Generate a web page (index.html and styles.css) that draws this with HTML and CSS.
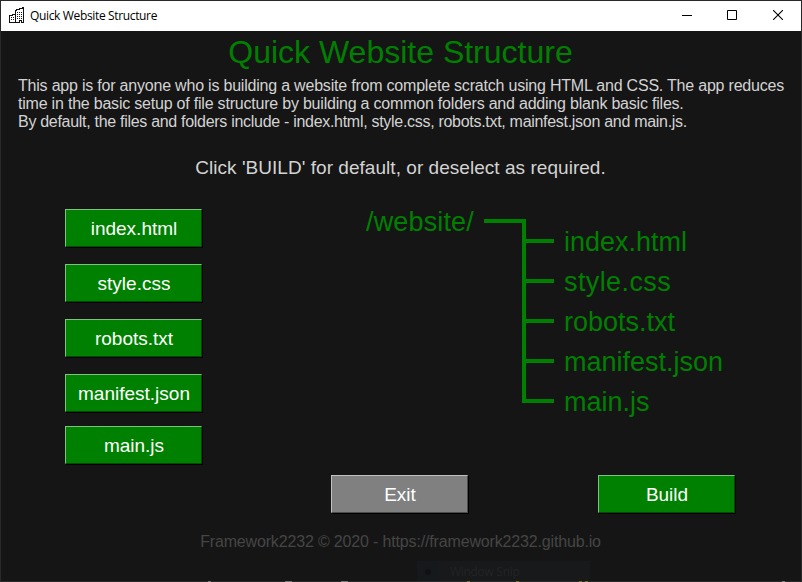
FILE: index.html
```
<!DOCTYPE html>
<html lang="en">
<head>
<meta charset="utf-8">
<title>Quick Website Structure</title>
<link rel="stylesheet" href="styles.css">
</head>
<body>
<div class="window">
  <header class="titlebar">
    <svg class="app-icon" width="16" height="17" viewBox="0 0 16 17" fill="none" stroke="#111" shape-rendering="crispEdges">
      <path d="M.5 15V8.500H3V7.500H6M0 15.500H10V13.500H12V15.500H15M14.500 15V.5H13V1.500H10V2.500H7V3.500H6.500V15"/>
      <path d="M8 5.500H13M8 7.500H13M8 9.500H13M8 11.500H13M2 10.500H5M2 12.500H5" stroke-dasharray="1 1"/>
    </svg>
    <span class="caption">Quick Website Structure</span>
    <div class="controls">
      <svg width="10" height="10"><path d="M0 5.500H10" stroke="#000" shape-rendering="crispEdges"/></svg>
      <svg class="maximize" width="10" height="10"><path d="M.5 .5H9.500V9.500H.5Z" fill="none" stroke="#000"/></svg>
      <svg width="10" height="10"><path d="M0 0L10 10M10 0L0 10" stroke="#000" stroke-width="1.100"/></svg>
    </div>
  </header>
  <main>
    <h1>Quick Website Structure</h1>
    <p class="intro"><span class="l1">This app is for anyone who is building a website from complete scratch using HTML and CSS. The app reduces</span><br><span class="l2">time in the basic setup of file structure by building a common folders and adding blank basic files.</span><br><span class="l3">By default, the files and folders include - index.html, style.css, robots.txt, mainfest.json and main.js.</span></p>
    <p class="hint">Click 'BUILD' for default, or deselect as required.</p>
    <section class="workspace">
      <div class="files">
        <button>index.html</button>
        <button>style.css</button>
        <button>robots.txt</button>
        <button>manifest.json</button>
        <button class="last">main.js</button>
      </div>
      <div class="tree">
        <span class="root">/website/</span>
        <svg class="branches" width="70" height="184" viewBox="0 0 70 184" fill="none" stroke="#008000" stroke-width="4">
          <path d="M0 2H40V182H70M40 22H70M40 62H70M40 102H70M40 142H70"/>
        </svg>
        <ul>
          <li>index.html</li>
          <li class="css">style.css</li>
          <li>robots.txt</li>
          <li>manifest.json</li>
          <li>main.js</li>
        </ul>
      </div>
    </section>
    <div class="actions">
      <button class="exit">Exit</button>
      <button>Build</button>
    </div>
    <footer>Framework2232 © 2020 - https://framework2232.github.io</footer>
  </main>
  <div class="ghost"><span class="dot"></span><span>Window Snip</span></div>
  <svg class="edge" width="802" height="2" shape-rendering="crispEdges">
    <path d="M0 1.500H802" stroke="#292929"/>
    <path d="M208 1.500h3M285 1.500h7M341 1.500h7M782 1.500h3" stroke="#777"/>
    <path d="M467 1.500h3M516 1.500h3M579 1.500h3M585 1.500h3" stroke="#776b18"/>
  </svg>
</div>
</body>
</html>
```
FILE: styles.css
```
* { box-sizing: border-box; }
body { margin: 0; background: #151515; }
.window {
  position: relative;
  width: 802px;
  height: 582px;
  overflow: hidden;
  border: 1px solid #292929;
  border-bottom: 0;
  background: #151515;
  font-family: "Liberation Sans", Arial, sans-serif;
}
.titlebar {
  display: flex;
  align-items: center;
  height: 30px;
  padding-left: 8px;
  background: #fff;
}
.app-icon { flex: none; margin-top: -1px; }
.caption {
  margin-left: 5px;
  font: 12px/16px "Open Sans", "Noto Sans", sans-serif;
  letter-spacing: -0.35px;
  color: #000;
  white-space: nowrap;
}
.controls { display: flex; gap: 36px; margin: -2px 18px 0 auto; }
.maximize { margin-left: -1px; }
h1, p, ul { margin: 0; padding: 0; font-weight: normal; white-space: nowrap; }
h1 {
  padding: 3px 1px 0 0;
  font-size: 32px;
  line-height: 36px;
  text-align: center;
  color: #008000;
}
.intro {
  height: 54px;
  margin: 7px 0 0 17px;
  font-size: 16px;
  line-height: 18px;
  color: #d3d3d3;
}
.l1 { letter-spacing: -0.207px; }
.l2 { letter-spacing: -0.21px; }
.l3 { letter-spacing: -0.295px; }
.hint {
  margin-top: 26px;
  padding-right: 1px;
  font-size: 19px;
  line-height: 22px;
  letter-spacing: 0.04px;
  text-align: center;
  color: #d3d3d3;
}
.workspace { display: flex; height: 296px; padding: 30px 0 0 64px; }
.files { display: flex; flex-direction: column; gap: 17px; }
button {
  flex: none;
  width: 137px;
  height: 38px;
  padding: 2px 0 0 1px;
  border: 1px solid;
  border-color: #80c080 #004b00 #004b00 #80c080;
  border-radius: 0;
  box-shadow: 1px 1px 0 #000;
  background: #008000;
  color: #fff;
  font: 19px/22px "Liberation Sans", Arial, sans-serif;
}
.last { margin-top: -3px; }
.tree { display: flex; margin-left: 164px; color: #008000; font-size: 27px; }
.root { width: 118px; line-height: 30px; margin-top: -2px; letter-spacing: 0.15px; }
.branches { margin-top: 10px; }
.tree ul { margin: 13px 0 0 10px; list-style: none; }
.tree li { height: 40px; line-height: 40px; }
.css { letter-spacing: 0.4px; }
.actions { display: flex; gap: 130px; padding-left: 330px; }
.exit { background: #808080; border-color: #c0c0c0 #4b4b4b #4b4b4b #c0c0c0; }
footer {
  margin-top: 20px;
  padding-right: 1px;
  font-size: 16px;
  line-height: 18px;
  letter-spacing: -0.16px;
  text-align: center;
  color: #454545;
}
.ghost {
  position: absolute;
  left: 416px;
  top: 560px;
  display: flex;
  align-items: center;
  width: 173px;
  height: 21px;
  background: linear-gradient(90deg, #15191b 22px, #18191a 22px);
  color: #222425;
  font: 12px/20px "Open Sans", sans-serif;
  letter-spacing: -0.3px;
}
.dot { width: 6px; height: 6px; margin: 0 19px 0 8px; border-radius: 50%; background: #101214; }
.edge { position: absolute; left: -1px; bottom: 0; }
```
